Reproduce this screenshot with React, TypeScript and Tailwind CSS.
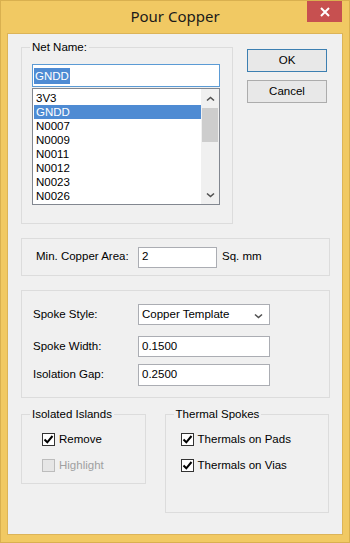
import React from 'react';

const nets = ['3V3', 'GNDD', 'N0007', 'N0009', 'N0011', 'N0012', 'N0023', 'N0026'];

function Chevron({ down }: { down?: boolean }) {
  return (
    <svg width="9" height="6" viewBox="0 0 9 6">
      <path
        d={down ? 'M1 1.5 L4.5 4.5 L8 1.5' : 'M1 4.5 L4.5 1.5 L8 4.5'}
        fill="none"
        stroke="#505050"
        strokeWidth="1.6"
      />
    </svg>
  );
}

function Check({ checked, disabled, label }: { checked?: boolean; disabled?: boolean; label: string }) {
  return (
    <div className="flex items-center h-[13px]">
      <div
        className={`w-[13px] h-[13px] border flex items-center justify-center ${
          disabled ? 'border-[#bcbcbc] bg-[#e6e6e6]' : 'border-[#333333] bg-white'
        }`}
      >
        {checked && (
          <svg width="11" height="11" viewBox="0 0 11 11">
            <path d="M1.5 5.5 L4.3 8.3 L9.5 2" fill="none" stroke="#000" strokeWidth="2" />
          </svg>
        )}
      </div>
      <span className={`ml-[4px] ${disabled ? 'text-[#a0a0a0]' : 'text-black'}`}>{label}</span>
    </div>
  );
}

function Group({ title, className, children }: { title?: string; className: string; children?: React.ReactNode }) {
  return (
    <div className={`relative border border-[#dcdcdc] ${className}`}>
      {title && (
        <span className="absolute -top-[8px] left-[8px] px-[2px] bg-[#f0f0f0] leading-[14px]">{title}</span>
      )}
      {children}
    </div>
  );
}

function Field({ value, className }: { value: string; className: string }) {
  return (
    <div className={`border border-[#abadb3] bg-white flex items-center pl-[3px] ${className}`}>
      {value}
    </div>
  );
}

export default function App() {
  return (
    <div
      className="w-[350px] h-[543px] bg-[#f1c963] border border-[#d9b04f] flex flex-col text-[11.5px] text-black"
      style={{ fontFamily: '"Liberation Sans", Arial, sans-serif' }}
    >
      {/* title bar */}
      <div className="relative h-[32px] flex items-center justify-center">
        <span className="text-[15px] text-[#1a1a1a] -mt-[2px]" style={{ fontFamily: '"Noto Sans", sans-serif' }}>
          Pour Copper
        </span>
        <div className="absolute right-[7px] top-0 w-[35px] h-[21px] bg-[#c75050] flex items-center justify-center">
          <svg width="10" height="10" viewBox="0 0 10 10">
            <path d="M1 1 L9 9 M9 1 L1 9" stroke="#fff" strokeWidth="2" />
          </svg>
        </div>
      </div>

      {/* client area */}
      <div className="mx-[6px] h-[502px] bg-[#f0f0f0] border border-[#dcb458] px-[13px] pt-[13px]">
        <div className="flex">
          <Group title="Net Name:" className="w-[212px] h-[177px] pl-[10px] pt-[16px]">
            <div className="w-[188px] h-[23px] border border-[#5b9bd5] bg-white flex items-center pl-[1px]">
              <span className="bg-[#4e8bd3] text-white leading-[16px] pl-[1px] pr-[1px]">GNDD</span>
            </div>
            <div className="mt-[1px] w-[188px] h-[117px] border border-[#828790] bg-white flex">
              <div className="flex-1 pt-[2px] pl-[1px]">
                {nets.map((n) => (
                  <div
                    key={n}
                    className={`h-[14px] leading-[14px] pl-[2px] ${n === 'GNDD' ? 'bg-[#4e8bd3] text-white' : ''}`}
                  >
                    {n}
                  </div>
                ))}
              </div>
              <div className="w-[18px] bg-[#f0f0f0] flex flex-col">
                <div className="h-[19px] flex items-center justify-center">
                  <Chevron />
                </div>
                <div className="mx-[1px] h-[34px] bg-[#cdcdcd]" />
                <div className="flex-1" />
                <div className="h-[18px] flex items-center justify-center">
                  <Chevron down />
                </div>
              </div>
            </div>
          </Group>

          <div className="ml-[14px] mt-[2px] flex flex-col gap-[8px]">
            <div className="w-[80px] h-[23px] border border-[#3c7fb1] bg-[#e8e8e8] flex items-center justify-center">
              OK
            </div>
            <div className="w-[80px] h-[23px] border border-[#acacac] bg-[#e8e8e8] flex items-center justify-center">
              Cancel
            </div>
          </div>
        </div>

        <Group className="mt-[14px] w-[309px] h-[38px] flex items-center pl-[14px]">
          <span className="w-[102px]">Min. Copper Area:</span>
          <Field value="2" className="w-[79px] h-[21px]" />
          <span className="ml-[5px]">Sq. mm</span>
        </Group>

        <Group className="mt-[14px] w-[309px] h-[108px] pl-[11px] pt-[13px]">
          <div className="flex items-center">
            <span className="w-[105px]">Spoke Style:</span>
            <div className="w-[132px] h-[21px] border border-[#abadb3] bg-white flex items-center pl-[3px] pr-[6px]">
              <span className="flex-1">Copper Template</span>
              <div className="mt-[3px]">
                <Chevron down />
              </div>
            </div>
          </div>
          <div className="flex items-center mt-[11px]">
            <span className="w-[105px]">Spoke Width:</span>
            <Field value="0.1500" className="w-[132px] h-[21px]" />
          </div>
          <div className="flex items-center mt-[7px]">
            <span className="w-[105px]">Isolation Gap:</span>
            <Field value="0.2500" className="w-[132px] h-[22px]" />
          </div>
        </Group>

        <div className="mt-[16px] flex items-start">
          <Group title="Isolated Islands" className="w-[125px] h-[70px] pl-[20px] pt-[18px] flex flex-col gap-[13px]">
            <Check checked label="Remove" />
            <Check disabled label="Highlight" />
          </Group>
          <Group title="Thermal Spokes" className="ml-[19px] w-[165px] h-[99px] pl-[15px] pt-[18px] flex flex-col gap-[13px]">
            <Check checked label="Thermals on Pads" />
            <Check checked label="Thermals on Vias" />
          </Group>
        </div>
      </div>
    </div>
  );
}
